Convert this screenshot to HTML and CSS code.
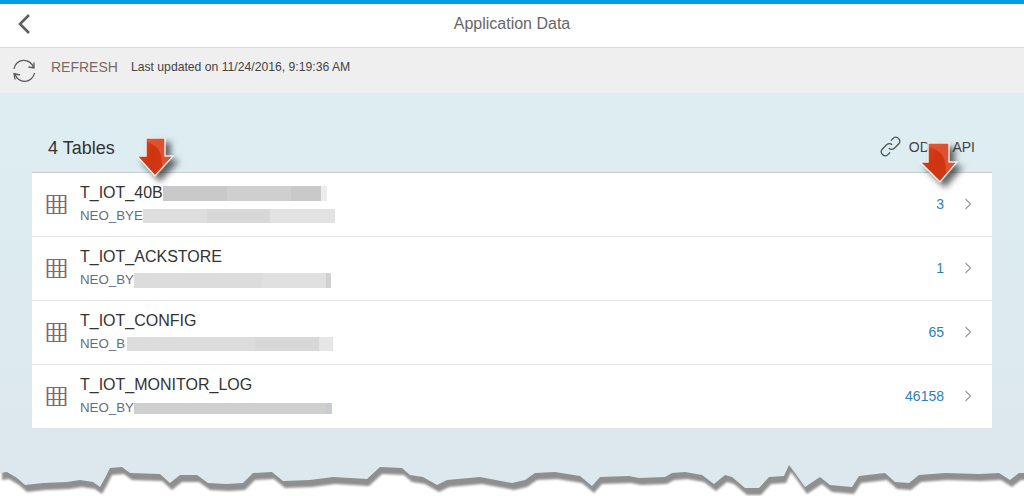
FILE: index.html
```html
<!DOCTYPE html>
<html lang="en">
<head>
<meta charset="utf-8">
<title>Application Data</title>
<link rel="stylesheet" href="styles.css">
</head>
<body>
<div class="page">
  <svg class="defs" width="0" height="0">
    <defs>
      <symbol id="grid-icon" viewBox="0 0 21 21">
        <path class="g-o" d="M.5 2v19M6.5 2v19M12.5 2v19M18.5 2v19"/>
        <path class="g-b" d="M2.5 2v19M8.5 2v19M14.5 2v19M20.5 2v19"/>
        <path class="g-d" d="M1.5 2v19M7.5 2v19M13.5 2v19M19.5 2v19M1 2.5h19M1 8.5h19M1 14.5h19M1 20.5h19"/>
      </symbol>
      <linearGradient id="red" x1="0" y1="0" x2="1" y2="0.6">
        <stop offset="0" stop-color="#dc4420"/>
        <stop offset="0.5" stop-color="#cf3410"/>
        <stop offset="1" stop-color="#d23a16"/>
      </linearGradient>
    </defs>
  </svg>
  <header class="titlebar">
    <svg class="back" width="16" height="24" viewBox="0 0 16 24"><path d="M13 3 L4 12 L13 21"/></svg>
    <h1 class="title">Application Data</h1>
  </header>
  <div class="toolbar">
    <svg class="refresh" width="24" height="24" viewBox="0 0 24 24">
      <path d="M2 10 A10 10 0 0 1 21.5 8.5"/><path d="M22 3.5 V9 L16.5 8"/>
      <path d="M22.5 14 A10 10 0 0 1 3 15"/><path d="M3 20.5 L2 14.5 L8 16"/>
    </svg>
    <span class="refresh-label">REFRESH</span>
    <span class="updated">Last updated on 11/24/2016, 9:19:36 AM</span>
  </div>
  <main class="content">
    <div class="list-head">
      <span class="count">4 Tables</span>
      <span class="odata">
        <svg class="link" width="21" height="21" viewBox="1.5 1.5 19 19">
          <path d="M9.5 12.5 a3.6 3.6 0 0 0 5 0 l4.2-4.2 a3.6 3.6 0 0 0-5-5 l-2.4 2.4"/>
          <path d="M12.5 9.5 a3.6 3.6 0 0 0-5 0 l-4.2 4.2 a3.6 3.6 0 0 0 5 5 l2.4-2.4"/>
        </svg>
        <span>OData API</span>
      </span>
    </div>
    <ul class="tables">
      <li class="row">
        <svg class="grid" width="21" height="21"><use href="#grid-icon"/></svg>
        <div class="names">
          <div class="name">T_IOT_40B<span class="mask mask-1a"></span></div>
          <div class="schema">NEO_BYE<span class="mask mask-1b"></span></div>
        </div>
        <span class="num">3</span>
        <svg class="chev" width="8" height="12" viewBox="0 0 8 12"><path d="M1.5 1 L6.5 6 L1.5 11"/></svg>
      </li>
      <li class="row">
        <svg class="grid" width="21" height="21"><use href="#grid-icon"/></svg>
        <div class="names">
          <div class="name">T_IOT_ACKSTORE</div>
          <div class="schema">NEO_BY<span class="mask mask-2b"></span></div>
        </div>
        <span class="num">1</span>
        <svg class="chev" width="8" height="12" viewBox="0 0 8 12"><path d="M1.5 1 L6.5 6 L1.5 11"/></svg>
      </li>
      <li class="row">
        <svg class="grid" width="21" height="21"><use href="#grid-icon"/></svg>
        <div class="names">
          <div class="name">T_IOT_CONFIG</div>
          <div class="schema">NEO_B<span class="mask mask-3b"></span></div>
        </div>
        <span class="num">65</span>
        <svg class="chev" width="8" height="12" viewBox="0 0 8 12"><path d="M1.5 1 L6.5 6 L1.5 11"/></svg>
      </li>
      <li class="row">
        <svg class="grid" width="21" height="21"><use href="#grid-icon"/></svg>
        <div class="names">
          <div class="name">T_IOT_MONITOR_LOG</div>
          <div class="schema">NEO_BY<span class="mask mask-4b"></span></div>
        </div>
        <span class="num">46158</span>
        <svg class="chev" width="8" height="12" viewBox="0 0 8 12"><path d="M1.5 1 L6.5 6 L1.5 11"/></svg>
      </li>
    </ul>
  </main>

  <svg class="tear" width="1024" height="66" viewBox="0 430 1024 66">
    <polygon class="tear-shadow" points="0,430 0,473 7,472 17,478 25,485 43,483 67,482 80,480 93,482 100,487 105,478 110,468 122,467 130,473 160,474 170,483 180,475 197,475 208,483 227,484 243,483 253,473 272,472 283,481 310,480 333,477 367,479 380,467 402,468 410,475 423,477 437,485 447,480 480,477 512,483 525,480 535,473 555,472 580,476 592,486 600,477 629,476 639,478 665,477 672,473 685,472 702,475 714,484 725,475 732,477 745,488 759,488 769,477 784,476 789,465 795,473 805,487 820,477 830,485 852,487 859,476 885,473 895,482 909,483 919,475 945,473 979,474 999,473 1010,480 1019,473 1024,473 1024,430"/>
    <polygon class="tear-fill" points="0,430 0,473 7,472 17,478 25,485 43,483 67,482 80,480 93,482 100,487 105,478 110,468 122,467 130,473 160,474 170,483 180,475 197,475 208,483 227,484 243,483 253,473 272,472 283,481 310,480 333,477 367,479 380,467 402,468 410,475 423,477 437,485 447,480 480,477 512,483 525,480 535,473 555,472 580,476 592,486 600,477 629,476 639,478 665,477 672,473 685,472 702,475 714,484 725,475 732,477 745,488 759,488 769,477 784,476 789,465 795,473 805,487 820,477 830,485 852,487 859,476 885,473 895,482 909,483 919,475 945,473 979,474 999,473 1010,480 1019,473 1024,473 1024,430"/>
  </svg>

  <svg class="arrows" width="1024" height="200" viewBox="0 130 1024 200">
    <polygon class="arrow" points="146,138 165,138 165,156 173,156 155,176 137,156 146,156"/>
    <path class="gloss" d="M147 139 H164 V157 H171 L162 167 C162 154 160 146 147 142 Z"/>
    <polygon class="arrow" points="928,143 949,143 949,162 957,162 940,182 920,162 928,162"/>
    <path class="gloss" d="M929 144 H948 V163 H955 L946 173 C946 160 944 151 929 147 Z"/>
  </svg>
</div>
</body>
</html>
```
FILE: styles.css
```css
* { box-sizing: border-box; }
html, body { margin: 0; padding: 0; background: #fff; }
body { font-family: "Liberation Sans", Arial, sans-serif; }
.page { position: relative; width: 1024px; height: 496px; overflow: hidden; display: flex; flex-direction: column; border-top: 4px solid #009de0; }
.defs { position: absolute; }

.titlebar { height: 44px; background: #fff; border-bottom: 1px solid #d9d9d9; display: flex; align-items: center; justify-content: center; position: relative; flex: none; padding-bottom: 4px; }
.title { margin: 0; font-size: 16px; font-weight: 400; color: #666; }
.back { position: absolute; left: 16px; top: 8px; }
.back path { fill: none; stroke: #5f5f5f; stroke-width: 2.6; }

.toolbar { height: 45px; flex: none; background: #efefef; display: flex; align-items: center; padding: 0 0 7px 12px; }
.refresh path { fill: none; stroke: #5a5a5a; stroke-width: 1.3; }
.refresh { flex: none; margin-top: 8px; }
.refresh-label { font-size: 14px; color: #7a6a66; margin-left: 15px; }
.updated { font-size: 12.2px; color: #444; margin-left: 13px; }

.content { flex: none; height: 346px; background: linear-gradient(#ddeef2, #dce8ed); padding: 32px 32px 0; }
.list-head { height: 47px; display: flex; justify-content: space-between; align-items: flex-start; padding: 11px 17px 0 16px; }
.count { font-size: 18px; color: #333; line-height: 20px; margin-top: 2px; }
.odata { display: flex; align-items: center; font-size: 14px; color: #444; line-height: 20px; gap: 8px; }
.link path { fill: none; stroke: #555; stroke-width: 1.2; }

.tables { list-style: none; margin: 0; padding: 0; background: #fff; border-top: 1px solid #c8ccce; }
.row { height: 64px; display: flex; align-items: center; padding: 0 0 2px 14px; border-bottom: 1px solid #e2e4e5; }
.grid { flex: none; }
.g-o, .g-b, .g-d { fill: none; stroke-width: 1; }
.g-o { stroke: #f2c39c; }
.g-b { stroke: #a9cdf0; }
.g-d { stroke: #77706a; }
.names { margin-left: 13px; flex: 1; }
.name { font-size: 16px; color: #333; line-height: 20px; height: 20px; display: flex; align-items: center; }
.schema { font-size: 13.3px; color: #5f6f80; line-height: 16px; height: 16px; margin-top: 5px; display: flex; align-items: center; }
.mask { display: block; flex: none; }
.mask-1a { width: 164px; height: 15px; background: linear-gradient(90deg, #c9c9c9 0 64px, #cfcfcf 64px 128px, #c9c9c9 128px 158px, #ececec 158px); }
.mask-1b { width: 192px; height: 14px; background: linear-gradient(90deg, #dedede 0 64px, #d8d8d8 64px 127px, #e2e2e2 127px); }
.mask-2b { width: 197px; height: 15px; background: linear-gradient(90deg, #dcdcdc 0 128px, #e0e0e0 128px 192px, #d0d0d0 192px); }
.mask-3b { width: 206px; height: 14px; margin-left: 2px; background: linear-gradient(90deg, #dcdcdc 0 127px, #d8d8d8 127px 192px, #e6e6e6 192px); }
.mask-4b { width: 198px; height: 11px; background: linear-gradient(90deg, #cfcfcf 0 192px, #c8ccd0 192px); }
.num { font-size: 14px; color: #2f80b4; }
.chev { flex: none; margin: 0 20px 0 20px; }
.chev path { fill: none; stroke: #999; stroke-width: 1.1; }

.tear { position: absolute; left: 0; top: 426px; }
.tear-fill { fill: #dce8ed; }
.tear-shadow { fill: #8f8f8f; transform: translate(2px, 7px); filter: blur(0.8px); }
.arrows { position: absolute; left: 0; top: 126px; filter: drop-shadow(5px 5px 3px rgba(40,40,40,.7)); }
.arrow { fill: url(#red); stroke: #eee; stroke-width: 1.5; }
.gloss { fill: #e9684a; opacity: .55; }
```
